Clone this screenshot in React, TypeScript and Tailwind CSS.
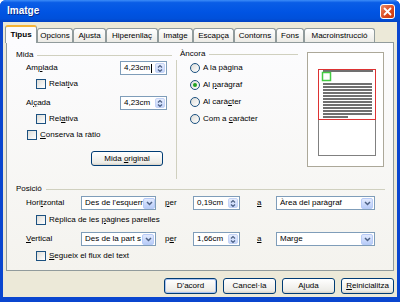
import React from 'react';

const tabs: [string, number][] = [
    ['Tipus', 32],
    ['Opcions', 36],
    ['Ajusta', 33],
    ['Hiperenllaç', 52],
    ['Imatge', 35],
    ['Escapça', 41],
    ['Contorns', 42],
    ['Fons', 28],
    ['Macroinstrucció', 71],
];

const Arrows = () => (
    <svg width="6" height="9" viewBox="0 0 6 9" fill="none" stroke="#4D6185" strokeWidth="1.2">
        <polyline points="1 3.5 3 1.5 5 3.5" />
        <polyline points="1 5.5 3 7.5 5 5.5" />
    </svg>
);

const ChevronDown = () => (
    <svg width="7" height="5" viewBox="0 0 7 5" fill="none" stroke="#4D6185" strokeWidth="1.5">
        <polyline points="1 1 3.5 3.5 6 1" />
    </svg>
);

const SpinField = ({ value, caret }: { value: string; caret?: boolean }) => (
    <div className="flex h-[14px] w-[47px] items-center border border-[#7F9DB9] bg-white">
        <span className="flex flex-1 items-center pl-[3px] leading-none">
            {value}
            {caret && <span className="ml-px inline-block h-[9px] w-px bg-black" />}
        </span>
        <div className="mr-px flex h-[10px] w-[10px] items-center justify-center rounded-[2px] border border-[#C4D3F5] bg-[linear-gradient(to_bottom,#E7EEFE,#C4D5FB)]">
            <Arrows />
        </div>
    </div>
);

const Select = ({ value, width }: { value: string; width: string }) => (
    <div className={`flex h-[14px] items-center overflow-hidden border border-[#7F9DB9] bg-white ${width}`}>
        <span className="flex-1 whitespace-nowrap pl-[3px] leading-none">{value}</span>
        <div className="mr-px flex h-[11px] w-[12px] shrink-0 items-center justify-center rounded-[2px] border border-[#B8CBF6] bg-[linear-gradient(to_bottom,#E2EAFE,#B8CCF8)]">
            <ChevronDown />
        </div>
    </div>
);

const Box = () => (
    <div className="h-[10px] w-[10px] shrink-0 border border-[#1C5180] bg-[linear-gradient(135deg,#DCDCD7,#FFFFFF)]" />
);

const Check = ({ children, pl }: { children: React.ReactNode; pl: string }) => (
    <div className={`flex h-[10px] items-center ${pl}`}>
        <Box />
        <span className="ml-[3px] leading-none">{children}</span>
    </div>
);

const Radio = ({ children, checked }: { children: React.ReactNode; checked?: boolean }) => (
    <div className="flex h-[17px] items-center pl-[13px]">
        <div className="flex h-[10px] w-[10px] items-center justify-center rounded-full border border-[#1C5180] bg-[linear-gradient(135deg,#DCDCD7,#FFFFFF)]">
            {checked && <div className="h-[4px] w-[4px] rounded-full bg-[#21A121]" />}
        </div>
        <span className="ml-[3px] leading-none">{children}</span>
    </div>
);

const Button = ({ children, def }: { children: React.ReactNode; def?: boolean }) => (
    <button
        className={`flex h-[16px] w-[53px] items-center justify-center rounded-[3px] border border-[#003C74] bg-[linear-gradient(to_bottom,#FFFFFF,#ECEBE6_85%,#D6D0C5)] leading-none text-black ${
            def ? 'shadow-[inset_0_0_0_1px_#A9C3F1]' : ''
        }`}
    >
        <span>{children}</span>
    </button>
);

const Preview = () => (
    <svg width="77" height="115" viewBox="0 0 77 115">
        <rect x="0.5" y="0.5" width="76" height="114" fill="#FFFFFF" stroke="#ACA899" />
        <rect x="11.5" y="17.5" width="57" height="86" fill="#FFFFFF" stroke="#808080" />
        <rect x="16" y="18" width="50" height="2" fill="#707070" />
        {Array.from({ length: 11 }).map((_, i) => (
            <rect key={i} x="16" y={31 + i * 3} width="49" height="2" fill="#707070" />
        ))}
        <rect x="16" y="64" width="25" height="2" fill="#707070" />
        <rect x="11.5" y="17.5" width="57" height="50" fill="none" stroke="#DD3333" />
        <rect x="15.5" y="20.5" width="8" height="8" fill="#FFFFFF" stroke="#44CC44" strokeWidth="1.5" />
    </svg>
);

export default function App() {
    return (
        <div className="flex h-[302px] w-[400px] flex-col rounded-t-[6px] bg-[#0A46CF] font-['Liberation_Sans',Arial,sans-serif] text-[8px] text-black">
            {/* Title bar */}
            <div className="flex h-[22px] shrink-0 items-center rounded-t-[6px] bg-[linear-gradient(to_bottom,#3C8CF8_0%,#0A5DE6_12%,#0054E3_55%,#0050DA_85%,#0343C4_100%)] pl-[7px]">
                <span className="flex-1 text-[10px] font-bold leading-none text-white [text-shadow:1px_1px_0_#0A2D8A]">Imatge</span>
                <div className="mr-[5px] flex h-[15px] w-[15px] items-center justify-center rounded-[3px] border border-white bg-[linear-gradient(135deg,#EC8A66,#D9471D_60%,#C8380F)]">
                    <svg width="9" height="9" viewBox="0 0 9 9" stroke="white" strokeWidth="1.8" strokeLinecap="round">
                        <line x1="1.5" y1="1.5" x2="7.5" y2="7.5" />
                        <line x1="7.5" y1="1.5" x2="1.5" y2="7.5" />
                    </svg>
                </div>
            </div>

            {/* Body */}
            <div className="mx-[3px] mb-[5px] flex flex-1 flex-col bg-[#ECE9D8] pt-[3px]">
                {/* Tabs */}
                <div className="flex h-[17px] items-end pl-[2px]">
                    {tabs.map(([name, w], i) =>
                        i === 0 ? (
                            <div
                                key={name}
                                style={{ width: w }}
                                className="relative z-10 -mb-px flex h-[18px] items-center justify-center rounded-t-[3px] border-x border-t-[2px] border-x-[#919B9C] border-t-[#F5B335] bg-[#FCFCFE] font-bold leading-none"
                            >
                                {name}
                            </div>
                        ) : (
                            <div
                                key={name}
                                style={{ width: w }}
                                className="flex h-[14px] items-center justify-center rounded-t-[3px] border-x border-t border-[#919B9C] bg-[linear-gradient(to_bottom,#FFFFFF,#ECEBE6)] leading-none"
                            >
                                {name}
                            </div>
                        )
                    )}
                </div>

                {/* Tab panel */}
                <div className="mx-[3px] h-[229px] border border-[#919B9C] bg-[linear-gradient(to_bottom,#FCFCFE,#F4F3EE)]">
                    <div className="flex h-[140px]">
                        {/* Mida */}
                        <div className="w-[169px] pt-[7px]">
                            <div className="flex h-[10px] items-center pl-[9px] pr-[4px]">
                                <span className="leading-none">Mida</span>
                                <div className="ml-[4px] h-px flex-1 bg-[#D0D0BF]" />
                            </div>
                            <div className="mt-[1px] flex h-[14px] items-center pl-[19px]">
                                <span className="w-[94px] leading-none">
                                    Am<u>p</u>lada
                                </span>
                                <SpinField value="4,23cm" caret />
                            </div>
                            <div className="mt-[4px]">
                                <Check pl="pl-[29px]">
                                    Relat<u>i</u>va
                                </Check>
                            </div>
                            <div className="mt-[7px] flex h-[14px] items-center pl-[19px]">
                                <span className="w-[94px] leading-none">
                                    Al<u>ç</u>ada
                                </span>
                                <SpinField value="4,23cm" />
                            </div>
                            <div className="mt-[4px]">
                                <Check pl="pl-[29px]">
                                    Rel<u>a</u>tiva
                                </Check>
                            </div>
                            <div className="mt-[6px]">
                                <Check pl="pl-[20px]">
                                    <u>C</u>onserva la ràtio
                                </Check>
                            </div>
                            <div className="ml-[84px] mt-[11px]">
                                <button className="flex h-[15px] w-[72px] items-center justify-center rounded-[3px] border border-[#003C74] bg-[linear-gradient(to_bottom,#FFFFFF,#ECEBE6_85%,#D6D0C5)] leading-none">
                                    <span>
                                        Mida <u>o</u>riginal
                                    </span>
                                </button>
                            </div>
                        </div>

                        <div className="mt-[17px] h-[119px] w-px bg-[#D0D0BF]" />

                        {/* Àncora */}
                        <div className="w-[126px] pt-[6px]">
                            <div className="flex h-[10px] items-center pl-[3px] pr-[5px]">
                                <span className="leading-none">Àncora</span>
                                <div className="ml-[4px] h-px flex-1 bg-[#D0D0BF]" />
                            </div>
                            <Radio>A la pàgina</Radio>
                            <Radio checked>
                                Al <u>p</u>aràgraf
                            </Radio>
                            <Radio>
                                Al carà<u>c</u>ter
                            </Radio>
                            <Radio>
                                Com a <u>c</u>aràcter
                            </Radio>
                        </div>

                        <div className="ml-[4px] mt-[9px]">
                            <Preview />
                        </div>
                    </div>

                    {/* Posició */}
                    <div className="mt-[1px] flex h-[10px] items-center pl-[9px] pr-[8px]">
                        <span className="leading-none">Posició</span>
                        <div className="ml-[4px] h-px flex-1 bg-[#D0D0BF]" />
                    </div>
                    <div className="mt-[2px] flex h-[14px] items-center pl-[19px]">
                        <span className="w-[55px] leading-none">
                            Hori<u>t</u>zontal
                        </span>
                        <Select value="Des de l'esquerr" width="w-[75px]" />
                        <span className="ml-[9px] w-[28px] leading-none">
                            <u>p</u>er
                        </span>
                        <SpinField value="0,19cm" />
                        <span className="ml-[17px] w-[19px] leading-none">
                            <u>a</u>
                        </span>
                        <Select value="Àrea del paràgraf" width="w-[99px]" />
                    </div>
                    <div className="mt-[5px]">
                        <Check pl="pl-[29px]">
                            Rèplica de les <u>p</u>àgines parelles
                        </Check>
                    </div>
                    <div className="mt-[7px] flex h-[14px] items-center pl-[19px]">
                        <span className="w-[55px] leading-none">
                            <u>V</u>ertical
                        </span>
                        <Select value="Des de la part s" width="w-[75px]" />
                        <span className="ml-[9px] w-[28px] leading-none">
                            p<u>e</u>r
                        </span>
                        <SpinField value="1,66cm" />
                        <span className="ml-[17px] w-[19px] leading-none">
                            <u>a</u>
                        </span>
                        <Select value="Marge" width="w-[99px]" />
                    </div>
                    <div className="mt-[5px]">
                        <Check pl="pl-[29px]">
                            <u>S</u>egueix el flux del text
                        </Check>
                    </div>
                </div>

                {/* Buttons */}
                <div className="mt-[7px] flex justify-end gap-[6px] pr-[3px]">
                    <Button def>D'acord</Button>
                    <Button>Cancel·la</Button>
                    <Button>
                        A<u>j</u>uda
                    </Button>
                    <Button>
                        <u>R</u>einicialitza
                    </Button>
                </div>
            </div>
        </div>
    );
}
